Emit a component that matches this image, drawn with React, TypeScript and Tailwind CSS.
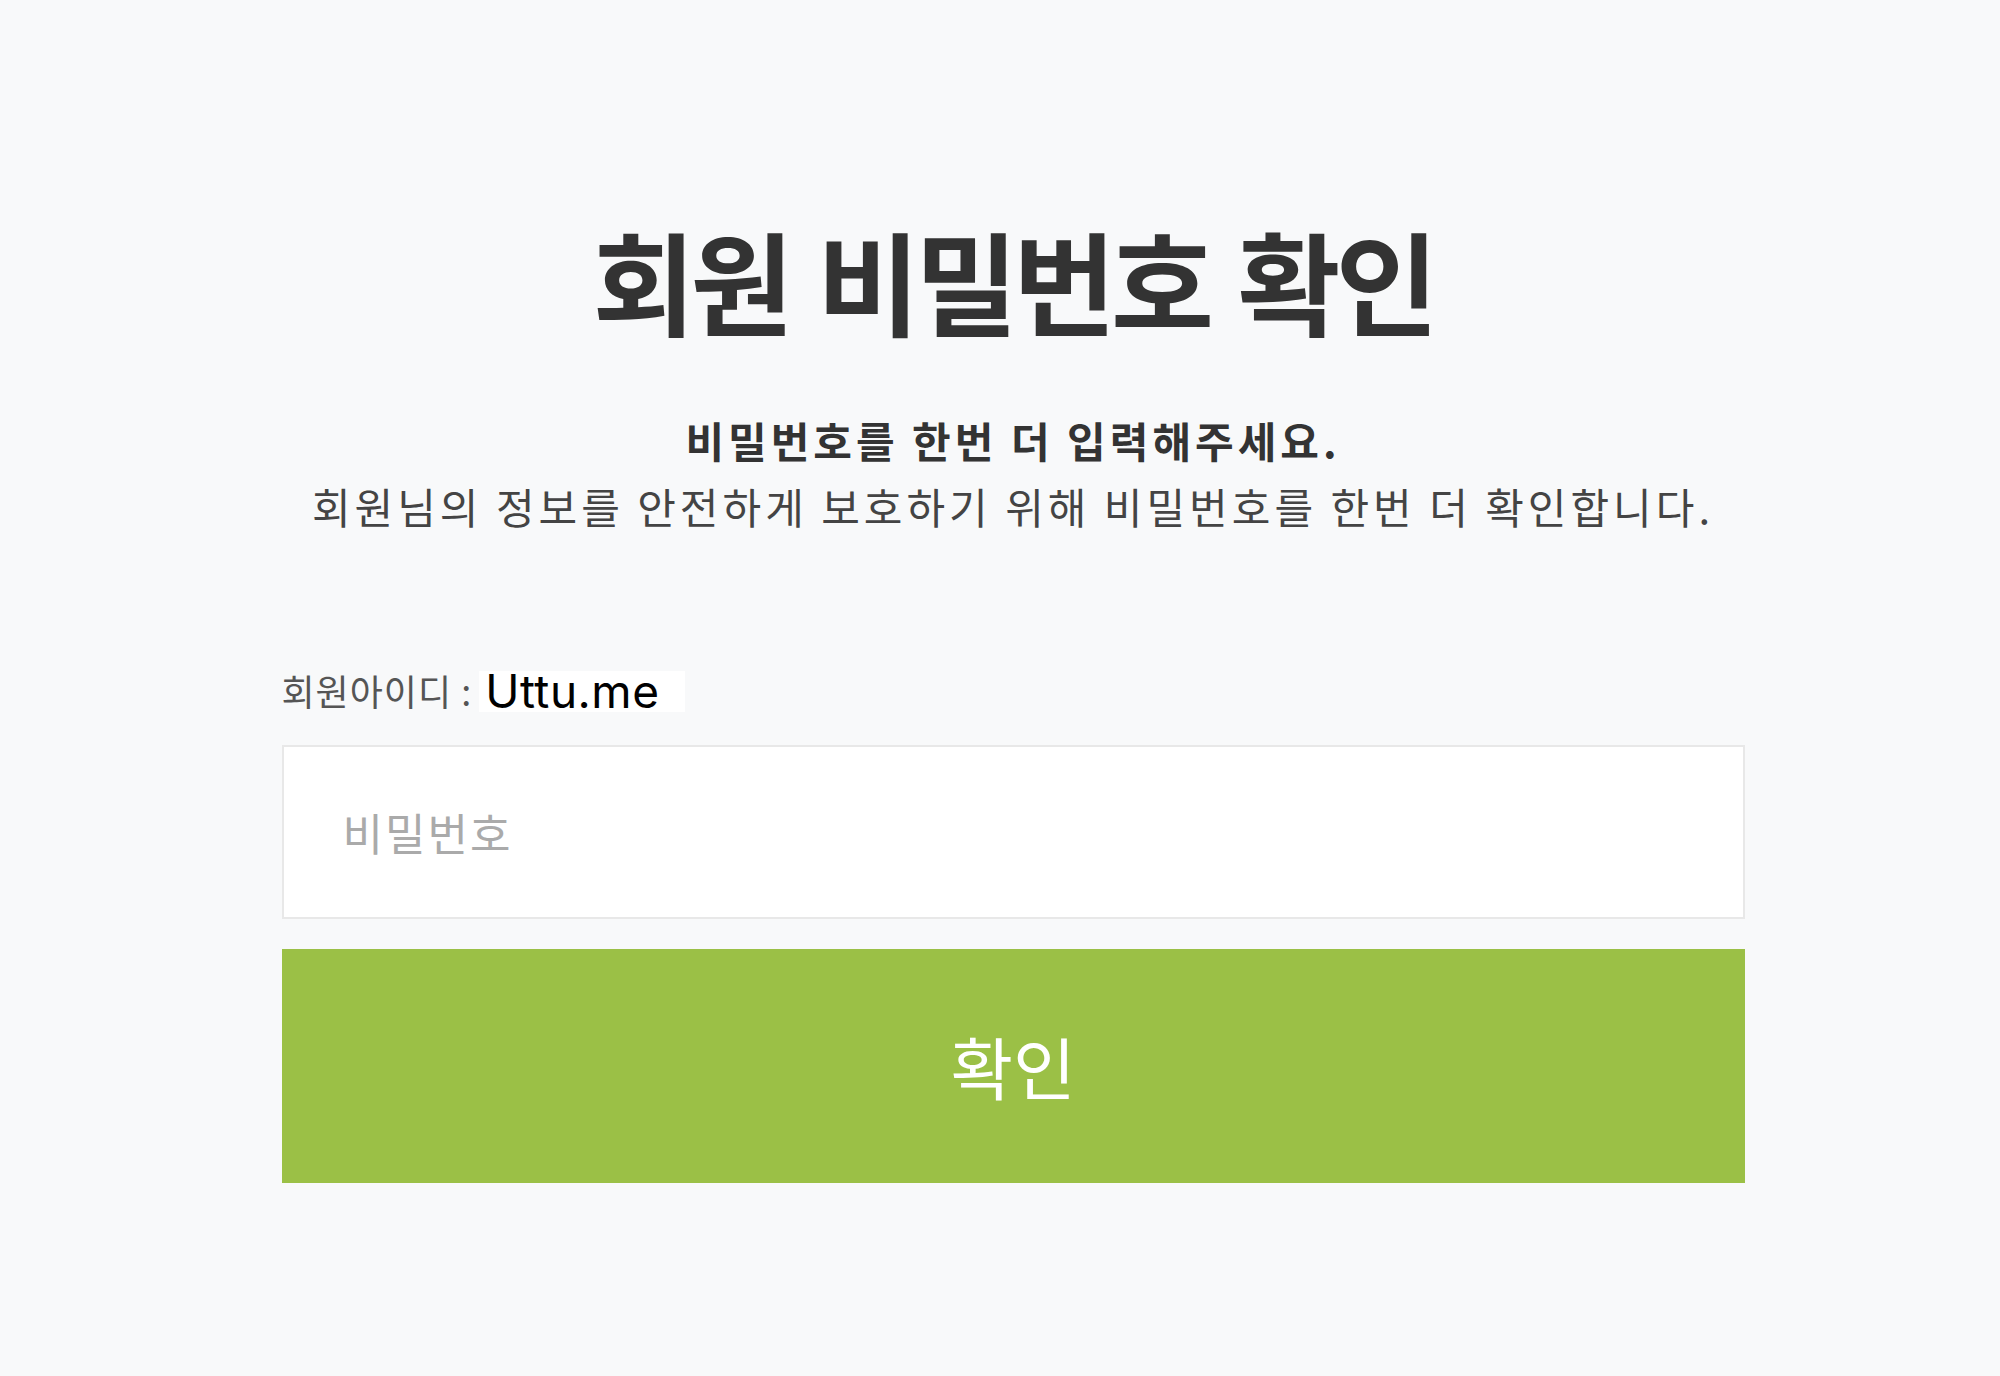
import React from "react";

const KR = "font-['Noto_Sans_CJK_KR','Noto_Sans',sans-serif]";

export default function App() {
  return (
    <div className={`min-h-screen bg-[#f8f9fa] pl-[26px] ${KR}`}>
      <div className="mx-auto w-[1463px] pt-[217px]">
        <h1 className="text-center text-[112px] font-bold leading-[124px] tracking-[-5px] [word-spacing:8px] text-[#333333]">
          회원 비밀번호 확인
        </h1>
        <p className="mt-[66px] text-center text-[42px] font-bold leading-[66px] tracking-[4px] text-[#333333]">
          비밀번호를 한번 더 입력해주세요.
        </p>
        <p className="text-center text-[42px] leading-[66px] tracking-[4px] text-[#444444]">
          회원님의 정보를 안전하게 보호하기 위해 비밀번호를 한번 더 확인합니다.
        </p>
        <div className="mt-[129px] flex h-[44px] items-end">
          <span className="text-[36px] leading-[44px] tracking-[1px] text-[#555555]">회원아이디 :</span>
          <span className="ml-[7px] flex h-[41px] w-[206px] items-center bg-white pl-[6px] font-['Inter',sans-serif] text-[46px] tracking-[0.5px] text-black">
            Uttu.me
          </span>
        </div>
        <div className="mt-[33px] flex h-[174px] items-center border-2 border-[#e8e8e8] bg-white pl-[59px]">
          <input
            type="password"
            placeholder="비밀번호"
            className={`w-full bg-transparent text-[44px] tracking-[2px] outline-none placeholder:text-[#aaaaaa] ${KR}`}
          />
        </div>
        <button className="mt-[30px] flex h-[234px] w-full items-center justify-center bg-[#9bc046] text-[68px] text-white">
          확인
        </button>
      </div>
    </div>
  );
}
